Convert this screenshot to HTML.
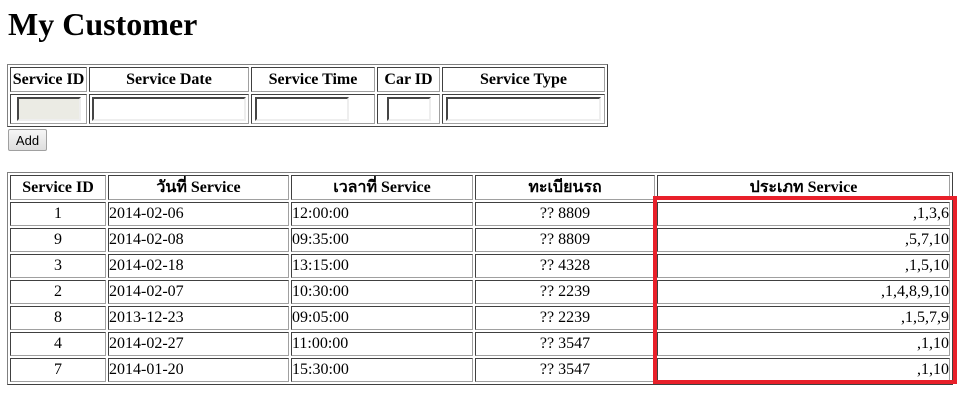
<!DOCTYPE html>
<html><head><meta charset="utf-8"><style>
body{margin:0;background:#fff;font-family:"Liberation Serif","Noto Serif CJK SC",serif;font-size:16px;color:#000;position:relative;width:967px;height:401px;overflow:hidden}
h1{position:absolute;left:8px;top:6px;margin:0;font-size:32px;font-weight:bold}
table{position:absolute;border-collapse:separate;border-spacing:2px;border:1px solid #808080;border-right-color:#404040;border-bottom-color:#404040;table-layout:fixed}
td,th{border:1px solid #404040;border-right-color:#a0a0a0;border-bottom-color:#a0a0a0;padding:0;box-sizing:border-box;white-space:nowrap;overflow:hidden;line-height:18px}
th{font-weight:bold;text-align:center}
input{box-sizing:border-box;height:24px;border:2px inset #eee;border-top-color:#999;border-left-color:#999;background:#fff;display:block;margin:0 auto}
.red{position:absolute;left:653px;top:196px;width:304px;height:188px;box-sizing:border-box;border:4px solid #e8202a}
button{position:absolute;left:8px;top:129px;width:39px;height:22px;font:13px "Liberation Sans",sans-serif;border:1px solid #a0a0a0;border-radius:2px;background:linear-gradient(#f6f6f6,#dedede);padding:0}
</style></head><body>
<h1>My Customer</h1>
<table style="left:7px;top:64px;width:601px">
<colgroup><col style="width:77px"><col style="width:160px"><col style="width:124px"><col style="width:63px"><col style="width:163px"></colgroup>
<tr style="height:25px"><th>Service ID</th><th>Service Date</th><th>Service Time</th><th>Car ID</th><th>Service Type</th></tr>
<tr style="height:30px"><td><input style="width:64px;background:#ebebe4"></td><td><input style="width:154px"></td><td><input style="width:94px;margin-left:3px"></td><td><input style="width:44px"></td><td><input style="width:155px"></td></tr>
</table>
<button>Add</button>
<table style="left:7px;top:172px;width:946px">
<colgroup><col style="width:96px"><col style="width:181px"><col style="width:182px"><col style="width:180px"><col style="width:293px"></colgroup>
<tr style="height:25px"><th>Service ID</th><th>วันที่ Service</th><th>เวลาที่ Service</th><th>ทะเบียนรถ</th><th>ประเภท Service</th></tr>
<tr style="height:24px"><td align="center">1</td><td>2014-02-06</td><td>12:00:00</td><td align="center">?? 8809</td><td align="right">,1,3,6</td></tr>
<tr style="height:24px"><td align="center">9</td><td>2014-02-08</td><td>09:35:00</td><td align="center">?? 8809</td><td align="right">,5,7,10</td></tr>
<tr style="height:24px"><td align="center">3</td><td>2014-02-18</td><td>13:15:00</td><td align="center">?? 4328</td><td align="right">,1,5,10</td></tr>
<tr style="height:24px"><td align="center">2</td><td>2014-02-07</td><td>10:30:00</td><td align="center">?? 2239</td><td align="right">,1,4,8,9,10</td></tr>
<tr style="height:24px"><td align="center">8</td><td>2013-12-23</td><td>09:05:00</td><td align="center">?? 2239</td><td align="right">,1,5,7,9</td></tr>
<tr style="height:24px"><td align="center">4</td><td>2014-02-27</td><td>11:00:00</td><td align="center">?? 3547</td><td align="right">,1,10</td></tr>
<tr style="height:24px"><td align="center">7</td><td>2014-01-20</td><td>15:30:00</td><td align="center">?? 3547</td><td align="right">,1,10</td></tr>
</table>
<div class="red"></div>
</body></html>
